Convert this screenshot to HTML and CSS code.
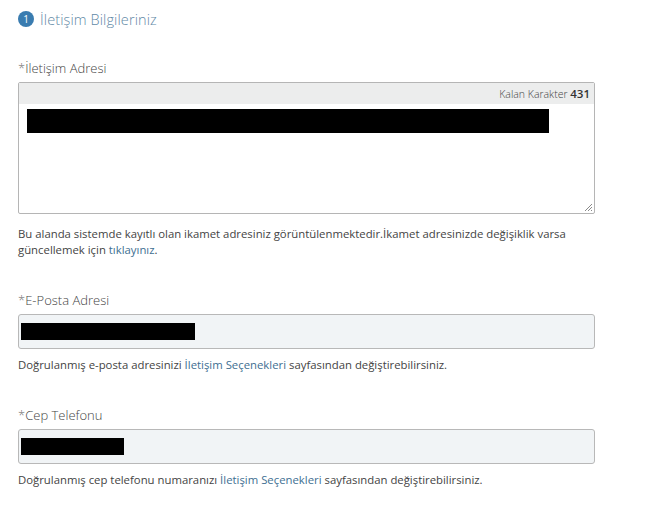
FILE: index.html
```html
<!DOCTYPE html>
<html lang="tr">
<head>
<meta charset="utf-8">
<link rel="stylesheet" href="styles.css">
</head>
<body>
<div class="page">
  <div class="section-title">
    <span class="step">1</span>
    <span class="title-text">İletişim Bilgileriniz</span>
  </div>

  <div class="field field-first">
    <div class="label"><span class="req">*</span>İletişim Adresi</div>
    <div class="textarea">
      <div class="counter">Kalan Karakter <b>431</b></div>
      <div class="ta-body">
        <div class="redact redact-address"></div>
        <svg class="grip" width="10" height="10" viewBox="0 0 10 10"><path d="M9 2 L2 9 M9 5 L5 9 M9 8 L8 9" stroke="#8a8a8a" stroke-width="1" fill="none"/></svg>
      </div>
    </div>
    <p class="help">Bu alanda sistemde kayıtlı olan ikamet adresiniz görüntülenmektedir.İkamet adresinizde değişiklik varsa güncellemek için <a href="#">tıklayınız</a>.</p>
  </div>

  <div class="field">
    <div class="label"><span class="req">*</span>E-Posta Adresi</div>
    <div class="input"><div class="redact redact-email"></div></div>
    <p class="help">Doğrulanmış e-posta adresinizi <a href="#">İletişim Seçenekleri</a> sayfasından değiştirebilirsiniz.</p>
  </div>

  <div class="field">
    <div class="label"><span class="req">*</span>Cep Telefonu</div>
    <div class="input"><div class="redact redact-phone"></div></div>
    <p class="help">Doğrulanmış cep telefonu numaranızı <a href="#">İletişim Seçenekleri</a> sayfasından değiştirebilirsiniz.</p>
  </div>
</div>
</body>
</html>
```

FILE: styles.css
```css
html, body {
  margin: 0;
  padding: 0;
  background: #ffffff;
}
body {
  font-family: "Open Sans", "Noto Sans", sans-serif;
  color: #444;
}
.page {
  width: 577px;
  padding: 11px 0 0 18px;
}
.section-title {
  display: flex;
  align-items: center;
  gap: 6px;
  height: 16px;
}
.step {
  width: 16px;
  height: 16px;
  border-radius: 50%;
  background: #3a7cb0;
  color: #fff;
  font-size: 10px;
  line-height: 16px;
  text-align: center;
  flex: none;
}
.title-text {
  font-size: 14.5px;
  font-weight: 300;
  color: #5f89a6;
  letter-spacing: 0.1px;
}
.field {
  margin-top: 33px;
}
.field-first {
  margin-top: 32px;
}
.label {
  font-size: 13px;
  font-weight: 300;
  line-height: 18px;
  color: #444;
  margin-bottom: 5px;
}
.req {
  color: #777;
}
.textarea {
  height: 130px;
  border: 1px solid #b5b5b5;
  border-radius: 2px;
  display: flex;
  flex-direction: column;
  background: #fff;
}
.counter {
  height: 21px;
  background: #eceded;
  font-size: 10.5px;
  line-height: 21px;
  text-align: right;
  padding-right: 4px;
  color: #444;
  font-weight: 300;
}
.counter b {
  font-weight: 600;
  font-size: 11.5px;
  color: #333;
}
.ta-body {
  flex: 1;
  position: relative;
  padding: 5px 0 0 8px;
}
.grip {
  position: absolute;
  right: 1px;
  bottom: 1px;
}
.redact {
  background: #000;
}
.redact-address {
  width: 522px;
  height: 24px;
}
.input {
  height: 33px;
  border: 1px solid #b8b8b8;
  border-radius: 3px;
  background: #f1f4f6;
  display: flex;
  align-items: center;
  padding-left: 2px;
}
.redact-email {
  width: 174px;
  height: 17px;
}
.redact-phone {
  width: 103px;
  height: 17px;
}
.help {
  margin: 8px 0 0 0;
  font-size: 11.35px;
  line-height: 16px;
  color: #444;
  width: 570px;
}
.field-first .help {
  margin-top: 12px;
}
.help a {
  color: #3e6f92;
  text-decoration: none;
}
```
